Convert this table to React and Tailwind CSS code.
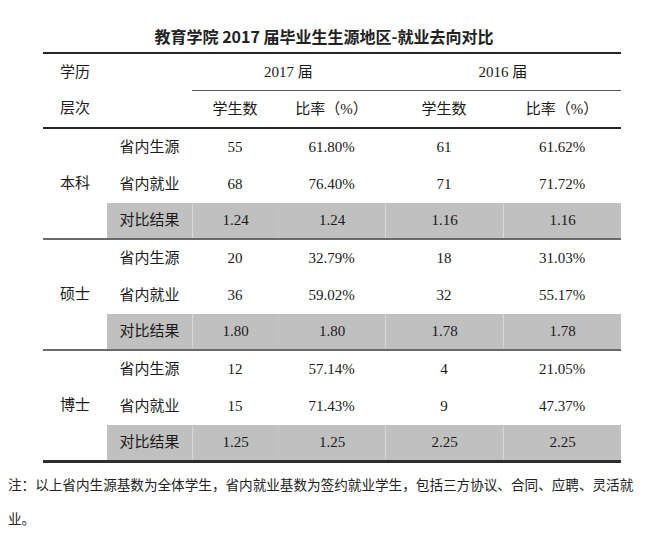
import React from "react";

const groups = [
  {
    label: "本科",
    rows: [
      ["省内生源", "55", "61.80%", "61", "61.62%"],
      ["省内就业", "68", "76.40%", "71", "71.72%"],
      ["对比结果", "1.24", "1.24", "1.16", "1.16"],
    ],
  },
  {
    label: "硕士",
    rows: [
      ["省内生源", "20", "32.79%", "18", "31.03%"],
      ["省内就业", "36", "59.02%", "32", "55.17%"],
      ["对比结果", "1.80", "1.80", "1.78", "1.78"],
    ],
  },
  {
    label: "博士",
    rows: [
      ["省内生源", "12", "57.14%", "4", "21.05%"],
      ["省内就业", "15", "71.43%", "9", "47.37%"],
      ["对比结果", "1.25", "1.25", "2.25", "2.25"],
    ],
  },
];

const cols = "grid grid-cols-[64px_85px_86px_107px_118px_118px]";

function Group({ g, last }) {
  return (
    <div
      className={`${cols} grid-rows-[37px_37px_35px] ${
        last ? "border-b-[3px] border-[#2e2e2e]" : "border-b-2 border-[#6a6a6a]"
      }`}
    >
      <div className="row-span-3 flex items-center justify-center">{g.label}</div>
      {g.rows.map((r, i) => {
        const gray = i === 2;
        return r.map((c, j) => (
          <div
            key={`${i}-${j}`}
            className={`flex items-center justify-center ${
              gray
                ? `bg-[#c0c0c0] ${
                    j === 1 || j === 3 || j === 4
                      ? "border-l border-[#d8d8d8]"
                      : j === 2
                      ? "border-l border-[#c6c6c6]"
                      : ""
                  }`
                : ""
            }`}
          >
            {c}
          </div>
        ));
      })}
    </div>
  );
}

export default function App() {
  return (
    <div
      className="w-[650px] h-[533px] bg-white text-[#1a1a1a] overflow-hidden"
      style={{ fontFamily: '"Liberation Serif", "Noto Sans CJK SC", serif' }}
    >
      <div
        className="pt-[24px] h-[48px] text-center text-[16px] leading-[24px] font-bold text-[#222]"
        style={{ fontFamily: '"Noto Sans CJK SC", "Noto Sans", sans-serif' }}
      >
        <span className="relative left-[-1px]">教育学院 2017 届毕业生生源地区-就业去向对比</span>
      </div>
      <div className="mt-[4px] ml-[43px] w-[578px] text-[15px]">
        <div className="border-t-2 border-[#262626]">
          <div className={`${cols} h-[36px]`}>
            <div className="flex items-center justify-center">学历</div>
            <div />
            <div className="col-span-2 flex items-center justify-center">2017 届</div>
            <div className="col-span-2 flex items-center justify-center">2016 届</div>
          </div>
          <div className={`${cols} h-[39px] border-b-2 border-[#262626]`}>
            <div className="flex items-center justify-center">层次</div>
            <div />
            <div className="col-span-4 grid grid-cols-[86px_107px_118px_118px] border-t border-[#555]">
              <div className="flex items-center justify-center">学生数</div>
              <div className="flex items-center justify-center">比率（%）</div>
              <div className="flex items-center justify-center">学生数</div>
              <div className="flex items-center justify-center">比率（%）</div>
            </div>
          </div>
        </div>
        {groups.map((g, i) => (
          <Group key={g.label} g={g} last={i === groups.length - 1} />
        ))}
      </div>
      <div
        className="mt-[4px] pl-[8px] text-[13.6px] leading-[34px] text-[#222]"
        style={{ fontFamily: '"Noto Sans CJK SC", serif' }}
      >
        <div className="whitespace-nowrap">
          注：以上省内生源基数为全体学生，省内就业基数为签约就业学生，包括三方协议、合同、应聘、灵活就
        </div>
        <div>业。</div>
      </div>
    </div>
  );
}
